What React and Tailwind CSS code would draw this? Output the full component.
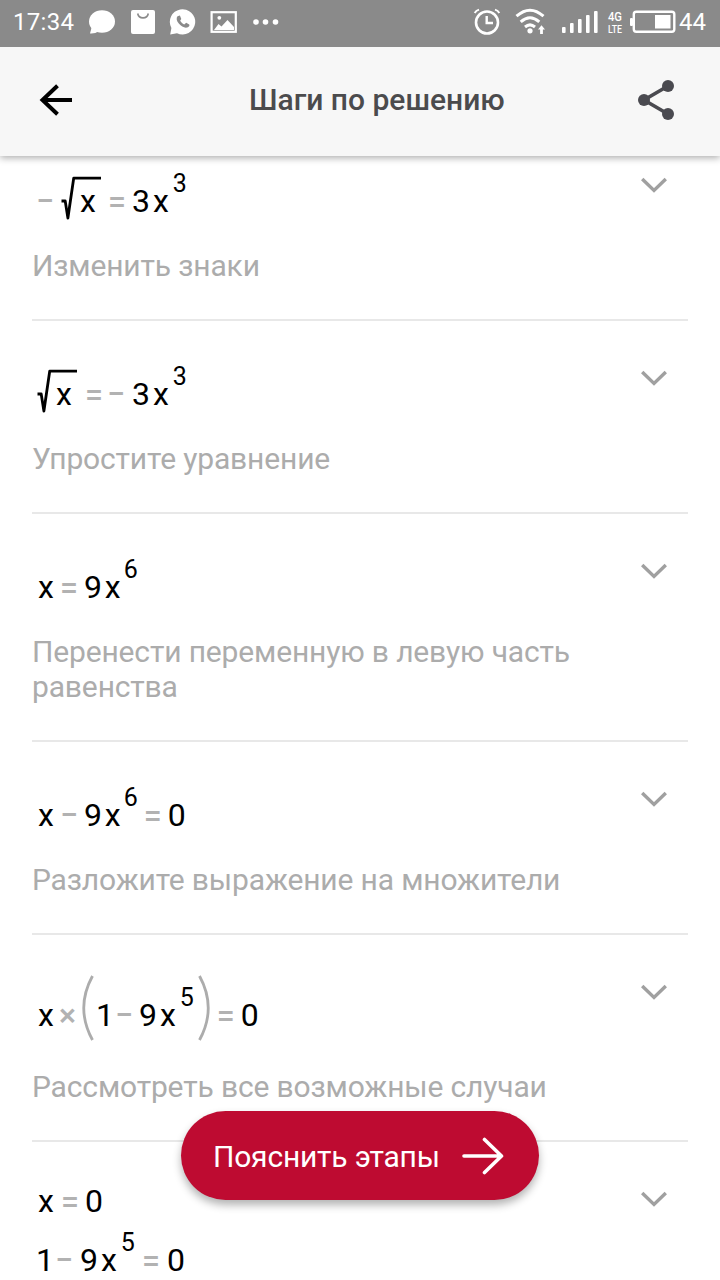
function Num({ children, className = '' }) {
  return <span className={`text-[32px] leading-8 text-black ${className}`}>{children}</span>;
}

function Op({ children, className = '' }) {
  return <span className={`text-[32px] leading-8 font-medium text-[#b2b2b2] ${className}`}>{children}</span>;
}

function Power({ children, className = 'ml-1' }) {
  return <span className={`-mt-[36px] text-[25px] leading-[25px] text-black ${className}`}>{children}</span>;
}

function Root({ children, className = '' }) {
  return (
    <span className={`relative flex h-[50px] w-10 items-center pl-[19px] ${className}`}>
      <svg className="absolute inset-0" width="40" height="50" fill="none" stroke="black" strokeWidth="2.8">
        <path d="M0.5 25H4.2L6.9 42L12.7 2.2H40" strokeLinejoin="round" />
      </svg>
      <Num>{children}</Num>
    </span>
  );
}

function Paren({ flip, className = '' }) {
  return (
    <svg className={`-mt-[14px] ${className}`} width="12" height="66" fill="none" stroke="#acacac" strokeWidth="2.8">
      <path d={flip ? 'M1.5 1Q19 33 1.5 65' : 'M10.5 1Q-7 33 10.5 65'} />
    </svg>
  );
}

function Chevron() {
  return (
    <svg className="mt-12 mr-5 shrink-0" width="28" height="18" fill="none" stroke="#a0a0a0" strokeWidth="3.4">
      <path d="M2.2 3L14 14.4L25.8 3" />
    </svg>
  );
}

function Step({ children, caption }) {
  return (
    <li className="flex border-b-2 border-[#e8e8e8]">
      <div className="flex-1 pt-[26px] pb-9">
        {children}
        <p className="text-[30px] leading-[35px] tracking-[-0.15px] text-[#acacac]">{caption}</p>
      </div>
      <Chevron />
    </li>
  );
}

function StatusBar() {
  return (
    <div className="relative z-20 flex h-[47px] shrink-0 items-center bg-[#8a8a8a] pb-[3px] text-2xl text-white">
      <span className="ml-[13px] w-[61px] tracking-[0.3px]">17:34</span>
      <svg className="ml-[14px]" width="28" height="26" fill="white">
        <ellipse cx="14" cy="12.5" rx="13" ry="11.3" />
        <path d="M4 17L2 24.5Q7 25 11 22Z" />
      </svg>
      <svg className="ml-[14px]" width="26" height="26">
        <rect x="1" y="1" width="24" height="24" rx="2" fill="white" />
        <path d="M7.7 4.5A5.4 5.4 0 0 0 18.3 4.5" fill="none" stroke="#8a8a8a" strokeWidth="1.6" />
      </svg>
      <svg className="ml-[13px]" width="28" height="28">
        <path d="M1.2 26.5L2.4 20A12.7 12.7 0 1 1 8 25.3Z" fill="white" />
        <path d="M8.5 8.2C7 10 7.5 13 10 15.8S16 20.6 19 19.2C20.3 18.5 20.7 17.4 20.2 16.5L17.2 14.8L15.2 16.5C13.4 15.8 11.9 14.2 11.2 12.5L12.3 10.9L10.9 7.4Z" fill="#8a8a8a" />
      </svg>
      <svg className="ml-[13px]" width="28" height="24">
        <rect x="1.6" y="2.2" width="24.2" height="19.6" fill="none" stroke="white" strokeWidth="2.2" />
        <path d="M4 20L8.5 14L11.5 16.5L17.5 10L24 17V20Z" fill="white" />
        <circle cx="9.3" cy="7.8" r="1.9" fill="white" />
      </svg>
      <svg className="ml-[14px]" width="28" height="8" fill="white">
        <circle cx="4" cy="4" r="2.8" />
        <circle cx="13.5" cy="4" r="2.8" />
        <circle cx="23.5" cy="4" r="2.8" />
      </svg>

      <svg className="ml-auto" width="28" height="28" fill="none" stroke="white" strokeWidth="2.6">
        <circle cx="14" cy="14.5" r="11" />
        <path d="M13.7 8V15H20" strokeWidth="2.4" />
        <path d="M1.7 5Q3 2.5 6 1.6M26.3 5Q25 2.5 22 1.6" strokeWidth="2" />
      </svg>
      <svg className="ml-[14px]" width="32" height="28" fill="none" stroke="white" strokeWidth="3">
        <path d="M1.5 8.2Q15 -3.8 28.5 8.2M5.7 13.8Q15 5.6 24.3 13.8M10 19Q15 14.8 20 19" />
        <circle cx="15" cy="22.8" r="2.6" fill="white" stroke="none" />
        <path d="M26.5 17.3L30 21.5H27.9V26H25.1V21.5H23Z" fill="white" stroke="none" />
      </svg>
      <svg className="ml-[14px]" width="38" height="24" fill="white">
        <rect x="1" y="17" width="3.6" height="6" rx="1" />
        <rect x="9" y="13" width="3.6" height="10" rx="1" />
        <rect x="17" y="9" width="3.6" height="14" rx="1" />
        <rect x="25" y="5" width="3.6" height="18" rx="1" />
        <rect x="33" y="1" width="3.6" height="22" rx="1" />
      </svg>
      <svg className="ml-[8px] font-medium" width="18" height="28" fill="white">
        <text x="1" y="13" fontSize="13.5" textLength="14" lengthAdjust="spacingAndGlyphs">4G</text>
        <text x="1" y="25" fontSize="11.5" textLength="14" lengthAdjust="spacingAndGlyphs">LTE</text>
      </svg>
      <svg className="ml-[4px]" width="48" height="24">
        <rect x="4.8" y="1.8" width="40.5" height="20" rx="2.5" fill="none" stroke="white" strokeWidth="2.4" />
        <rect x="1" y="8" width="3" height="8" rx="1" fill="white" />
        <rect x="26" y="5" width="15.5" height="13.5" fill="white" />
      </svg>
      <span className="mr-[14px] ml-[2px] w-[27px]">44</span>
    </div>
  );
}

export default function App() {
  return (
    <div className="relative flex h-[1280px] w-[720px] flex-col overflow-hidden bg-white font-['Roboto',sans-serif]">
      <StatusBar />

      <header className="relative z-10 flex h-[109px] shrink-0 items-center bg-[#f7f7f7] pr-11 pb-[3px] pl-[38px] shadow-[0_2px_7px_rgba(0,0,0,0.32)]">
        <svg width="36" height="36" fill="none" stroke="black" strokeWidth="4">
          <path d="M34 18H5M19.5 3.8L4.5 18L19.5 32.2" />
        </svg>
        <h1 className="ml-[175px] text-[30px] leading-9 font-medium text-[#4b4b4d]">Шаги по решению</h1>
        <svg className="ml-auto" width="40" height="42" fill="#4a4a50" stroke="#4a4a50">
          <path d="M32 7L8 21L32 35" fill="none" strokeWidth="3.6" />
          <circle cx="32" cy="7" r="6" stroke="none" />
          <circle cx="8" cy="21" r="6" stroke="none" />
          <circle cx="32" cy="35" r="6" stroke="none" />
        </svg>
      </header>

      {/* list is scrolled a little, its top is under the header */}
      <ul className="mx-8 -mt-7">
        <Step caption="Изменить знаки">
          <div className="flex h-[94px] items-center pl-1">
            <Op>−</Op>
            <Root className="ml-[7px]">x</Root>
            <Op className="ml-[7px]">=</Op>
            <Num className="ml-[6px]">3</Num>
            <Num className="ml-[3px]">x</Num>
            <Power>3</Power>
          </div>
        </Step>
        <Step caption="Упростите уравнение">
          <div className="flex h-[94px] items-center pl-[5px]">
            <Root>x</Root>
            <Op className="ml-[8px]">=</Op>
            <Op className="ml-[4px]">−</Op>
            <Num className="ml-[7px]">3</Num>
            <Num className="ml-[3px]">x</Num>
            <Power>3</Power>
          </div>
        </Step>
        <Step caption="Перенести переменную в левую часть равенства">
          <div className="flex h-[94px] items-center pl-[6px]">
            <Num>x</Num>
            <Op className="ml-[6px]">=</Op>
            <Num className="ml-[6px]">9</Num>
            <Num className="ml-[3px]">x</Num>
            <Power className="ml-[3px]">6</Power>
          </div>
        </Step>
        <Step caption="Разложите выражение на множители">
          <div className="flex h-[94px] items-center pl-[6px]">
            <Num>x</Num>
            <Op className="ml-[6px]">−</Op>
            <Num className="ml-[6px]">9</Num>
            <Num className="ml-[3px]">x</Num>
            <Power className="ml-[3px]">6</Power>
            <Op className="ml-[6px]">=</Op>
            <Num className="ml-[6px]">0</Num>
          </div>
        </Step>
        <Step caption="Рассмотреть все возможные случаи">
          <div className="flex h-[108px] items-center pl-[6px]">
            <Num>x</Num>
            <Op className="ml-[5px]">×</Op>
            <Paren className="ml-[6px]" />
            <Num className="ml-[2px]">1</Num>
            <Op className="ml-[1px]">−</Op>
            <Num className="ml-[6px]">9</Num>
            <Num className="ml-[3px]">x</Num>
            <Power>5</Power>
            <Paren flip className="ml-[4px]" />
            <Op className="ml-[7px]">=</Op>
            <Num className="ml-[6px]">0</Num>
          </div>
        </Step>
        <li className="flex">
          <div className="flex-1 pt-[30px]">
            <div className="flex h-[58px] items-center pl-[6px]">
              <Num>x</Num>
              <Op className="ml-[7px]">=</Op>
              <Num className="ml-[6px]">0</Num>
            </div>
            <div className="flex h-[60px] items-center pl-[4px]">
              <Num>1</Num>
              <Op className="ml-[1px]">−</Op>
              <Num className="ml-[7px]">9</Num>
              <Num className="ml-[3px]">x</Num>
              <Power>5</Power>
              <Op className="ml-[7px]">=</Op>
              <Num className="ml-[7px]">0</Num>
            </div>
          </div>
          <Chevron />
        </li>
      </ul>

      <button className="absolute top-[1111px] left-[181px] z-10 flex h-[89px] w-[358px] items-center justify-between rounded-full bg-[#be0b31] pt-px pr-[35px] pl-8 text-[30px] tracking-[-0.2px] text-white shadow-[0_5px_9px_rgba(0,0,0,0.3)]">
        Пояснить этапы
        <svg width="42" height="40" fill="none" stroke="white" strokeWidth="3.6" strokeLinecap="round" strokeLinejoin="round">
          <path d="M2 20H39M22.5 3.5L39.5 20L22.5 36.5" />
        </svg>
      </button>
    </div>
  );
}
